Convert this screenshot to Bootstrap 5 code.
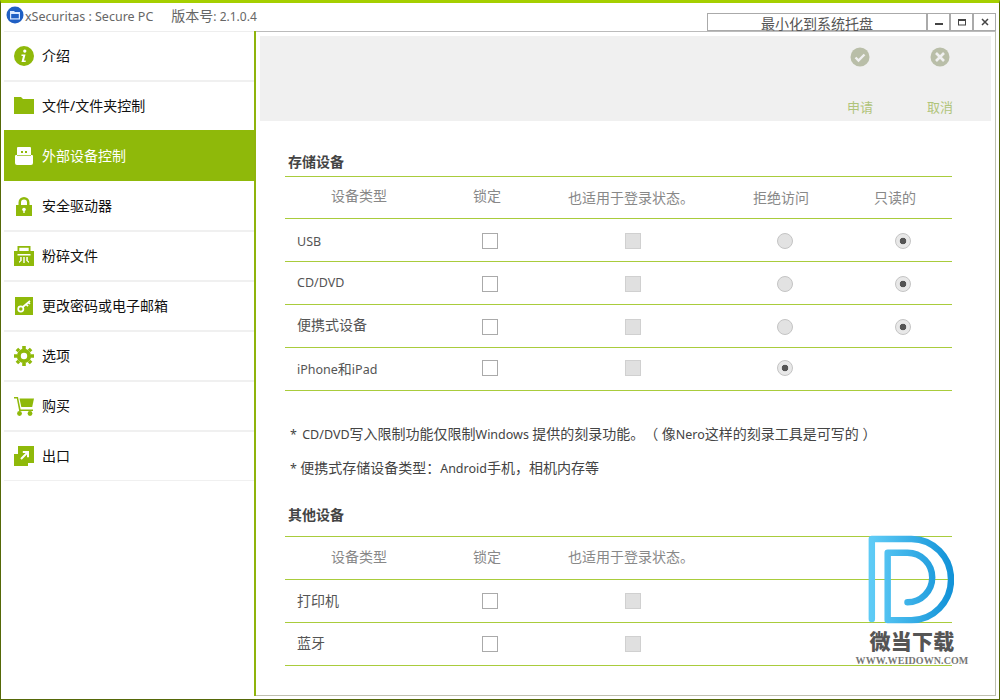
<!DOCTYPE html>
<html lang="zh">
<head>
<meta charset="utf-8">
<title>xSecuritas</title>
<link href="https://cdn.jsdelivr.net/npm/bootstrap@5.3.0/dist/css/bootstrap.min.css" rel="stylesheet">
<style>
html,body{height:100%;margin:0;overflow:hidden;background:#fff}
body{font-family:"Noto Sans","Noto Sans CJK SC",sans-serif;font-size:14px;line-height:1.2;color:#333;text-spacing-trim:space-all}
.win{width:1000px;height:700px;border-top:3px solid #a5cf00;border-left:1px solid #556808;border-right:1px solid #556808;border-bottom:1px solid #556808;position:relative;background:#fff}
.tbar{height:28px;padding-left:5px;padding-right:3px}
.tbar-title{color:#666;font-size:12.5px}
.tbar-title span{margin-top:6px}
.app-ico{width:18px;height:18px;margin-top:3px;margin-right:1px;flex:none}
.ver{margin-left:18px;font-size:14px;margin-top:5px!important}
.ver b{font-weight:400;font-size:12px}
.tray{width:220px;height:18px;margin-top:10px;border:1px solid #aaa;text-align:center;color:#555;font-size:14px;line-height:19px;background:#fff;white-space:nowrap}
.wbtn{width:23px;height:18px;margin-top:10px;border:1px solid #aaa;display:flex;align-items:center;justify-content:center;background:#fff}
.wbtn svg{width:10px;height:10px}
.bodyrow{height:665px;padding-left:3px;padding-right:3px}
.side{width:252px;flex:none;border-right:2px solid #8fb40c}
.side-item{height:50px;display:flex;align-items:center;gap:8px;padding-left:10px;color:#111;border-bottom:2px solid #f0f0f0;font-size:14px}
.side-item.first{height:51px;border-top:1px solid #eee}
.side-item.pre{border-bottom:0;height:48px}
.side-item.sel{background:#8fb90a;color:#fff;border-bottom:0;height:51px;padding-top:1px}
.side-item.post{height:51px;padding-top:1px}
.side-item.last{border-bottom:1px solid #f0f0f0;height:49px}
.side-item svg{width:20px;height:20px;flex:none}
.main{flex:1;border-top:1px solid #bbb;border-right:1px solid #bfc0b0;border-bottom:1px solid #bfc0b0;padding:4px 4px 0 4px;min-width:0;height:665px}
.actionbar{height:85px;background:#f0f0f0;padding-right:11px;justify-content:flex-end}
.act{width:80px;text-align:center;color:#b0c47a;font-size:13px;padding-top:11px}
.act svg{width:20px;height:20px;display:block;margin:0 auto 33px}
.pane{padding:0 39px 0 25px}
.sect{font-weight:700;font-size:14px;color:#444;padding-left:3px}
.sect.s1{margin-top:33px;height:22px}
.sect.s2{margin-top:31px;height:29px}
.lat{font-size:12.5px}
table.grid{table-layout:fixed;width:667px;margin:0;border-top:1px solid #a9cc3c;border-collapse:separate;border-spacing:0}
table.grid td,table.grid th{border-bottom:1px solid #a9cc3c;padding:0;text-align:center;vertical-align:middle;font-weight:400;background:transparent;box-shadow:none}
table.grid th{color:#888;height:42px;font-size:14px}
table.grid.t2 th{height:43px}
table.grid td{height:43px;color:#555;font-size:14px}
table.grid td.nm{text-align:left;padding-left:12px}
.c1{width:145px}.c2{width:120px}.c3{width:166px}.c4{width:138px}.c5{width:98px}
.hn{padding-left:3px!important;padding-bottom:3px!important}
.hl{padding-right:6px!important;padding-bottom:3px!important}
.ha{padding-right:4px!important;padding-top:1px!important}
.hb{padding-right:8px!important;padding-top:1px!important}
.hc{padding-right:16px!important;padding-top:1px!important}
.t2 .hn,.t2 .hl,.t2 .ha{padding-top:0!important;padding-bottom:1px!important}
table.grid td.dn{padding-top:2px}
table.grid td.up{padding-bottom:2px}
.form-check-input.box{width:16px;height:16px;margin:0 auto;border:1px solid #aaa;border-radius:0;background:#fff;opacity:1;display:block;box-shadow:none}
.form-check-input.box:disabled{background:#e0e0e0;border-color:#d0d0d0;opacity:1}
.form-check-input.rad{width:16px;height:16px;margin:0 auto;border:1px solid #c4c4c4;border-radius:50%;background:#e2e2e2;background-image:none;opacity:1;display:block;box-shadow:none}
.form-check-input.rad:checked{background:radial-gradient(circle,#555 0 3px,#e8e8e8 3.6px);border-color:#c4c4c4}
.note{font-size:14px;color:#444;padding-left:5px;height:17px;line-height:17px;white-space:nowrap}
.n1{margin-top:34px}
.n2{margin-top:17px}
.wm{position:absolute;left:849px;top:529px;width:124px;text-align:center;pointer-events:none}
.wm svg{width:99px;height:97px;display:block;margin:0 0 0 5px}
.wm-cn{font-weight:900;font-size:21px;letter-spacing:.3px;color:#555;line-height:24px}
.wm-en{font-family:"Liberation Serif",serif;font-weight:700;font-size:10px;color:#777;line-height:12px;margin-top:2px;white-space:nowrap;letter-spacing:.1px}
</style>
</head>
<body>
<div class="win">
  <div class="tbar d-flex">
    <div class="tbar-title d-flex align-items-start flex-grow-1">
      <svg class="app-ico" viewBox="0 0 18 18"><circle cx="9" cy="9" r="8.500" fill="#1f5fc4"/><path d="M4 5h4l1 1h5v7.500H4z" fill="#dbe9ff"/><path d="M5.200 8h7.600v4.300H5.200z" fill="#1f5fc4"/></svg>
      <span>xSecuritas : Secure PC</span><span class="ver">版本号<b>: 2.1.0.4</b></span>
    </div>
    <div class="tray">最小化到系统托盘</div>
    <div class="wbtn"><svg viewBox="0 0 10 10"><rect x="1" y="6" width="8" height="2" fill="#444"/></svg></div>
    <div class="wbtn"><svg viewBox="0 0 10 10"><rect x="1.500" y="2.500" width="7" height="5.500" fill="none" stroke="#444"/><rect x="1" y="2" width="8" height="2" fill="#444"/></svg></div>
    <div class="wbtn"><svg viewBox="0 0 10 10"><path d="M2 2l6 6M8 2l-6 6" stroke="#444" stroke-width="1.500"/></svg></div>
  </div>
  <div class="bodyrow d-flex">
    <nav class="side">
      <div class="side-item first"><svg viewBox="0 0 20 20"><circle cx="10" cy="10" r="10" fill="#8fb90a"/><path d="M10.800 3.500a1.600 1.600 0 1 1-.01 0zM7.500 8.500h4l-1.500 6h1.700V16H7.500L9 10H7.500z" fill="#fff"/></svg><span>介绍</span></div>
      <div class="side-item pre"><svg viewBox="0 0 20 20"><path d="M0 1h7l2 2h11v15H0z" fill="#8fb90a"/></svg><span>文件/文件夹控制</span></div>
      <div class="side-item sel"><svg viewBox="0 0 20 20"><path d="M4 1h12a1 1 0 0 1 1 1v7h1a1 1 0 0 1 1 1v7a2 2 0 0 1-2 2H3a2 2 0 0 1-2-2v-7a1 1 0 0 1 1-1h1V2a1 1 0 0 1 1-1z" fill="#fff"/><path d="M7 5h2v2H7zM11 5h2v2h-2z" fill="#8fb90a"/><path d="M3 9.500h14" stroke="#8fb90a" stroke-width=".7"/></svg><span>外部设备控制</span></div>
      <div class="side-item post"><svg viewBox="0 0 20 20"><path d="M4.500 9V6.500a5.500 5.500 0 0 1 11 0V9H13V6.500a3 3 0 0 0-6 0V9z" fill="#8fb90a"/><path d="M2 9h16v11H2z" fill="#8fb90a"/><circle cx="10" cy="13.500" r="1.800" fill="#fff"/><path d="M9.300 14h1.400v3H9.300z" fill="#fff"/></svg><span>安全驱动器</span></div>
      <div class="side-item"><svg viewBox="0 0 20 20"><path d="M3.500 6V0h13v6h-1.800V1.800H5.300V6z" fill="#8fb90a"/><path d="M0 5h20v15H0z" fill="#8fb90a"/><path d="M3.500 8h13v1.400h-13zM6.200 11h1.500v3.800L5 17v-1.400l1.200-1zM9.300 11h1.400v6H9.300zM12.300 11h1.500v3.600l1.200 1V17l-2.700-2.200z" fill="#fff"/></svg><span>粉碎文件</span></div>
      <div class="side-item"><svg viewBox="0 0 20 20"><path d="M1 1h18v18H1z" fill="#8fb90a"/><circle cx="6.800" cy="13" r="2.600" fill="none" stroke="#fff" stroke-width="1.700"/><path d="M8.800 11l7.200-6.200M12 8.200l2 2M14.300 6.300l1.600 1.700" stroke="#fff" stroke-width="1.700" fill="none"/></svg><span>更改密码或电子邮箱</span></div>
      <div class="side-item"><svg viewBox="0 0 20 20"><circle cx="10" cy="10" r="5.200" fill="none" stroke="#8fb90a" stroke-width="4"/><g stroke="#8fb90a" stroke-width="3.600"><path d="M10 0v3M10 17v3M0 10h3M17 10h3M2.900 2.900L5 5M15 15l2.100 2.100M2.900 17.100L5 15M15 5l2.100-2.100"/></g></svg><span>选项</span></div>
      <div class="side-item"><svg viewBox="0 0 20 20"><path d="M0 1h4l2.600 12.500H19v1.500H5.200L2.800 2.600H0z" fill="#8fb90a"/><path d="M5.500 2.500H20l-1.800 8.500H7.300z" fill="#8fb90a"/><circle cx="5.500" cy="17.500" r="2.400" fill="#8fb90a"/><circle cx="16" cy="17.500" r="2.400" fill="#8fb90a"/></svg><span>购买</span></div>
      <div class="side-item last"><svg viewBox="0 0 20 20"><path d="M4 0h16v17h-6v3H0V8h4z" fill="#8fb90a"/><path d="M7 13l6.500-6.500M8.800 6h5.200v5.200" stroke="#fff" stroke-width="2" fill="none"/></svg><span>出口</span></div>
    </nav>
    <main class="main">
      <div class="actionbar d-flex">
        <div class="act"><svg viewBox="0 0 20 20"><circle cx="10" cy="10" r="9.500" fill="#b9bea8"/><path d="M5.500 10.500l3 3 6-6" fill="none" stroke="#f0f0f0" stroke-width="2.400"/></svg>申请</div>
        <div class="act"><svg viewBox="0 0 20 20"><circle cx="10" cy="10" r="9.500" fill="#b9bea8"/><path d="M6 6l8 8M14 6l-8 8" fill="none" stroke="#f0f0f0" stroke-width="2.600"/></svg>取消</div>
      </div>
      <div class="pane">
        <div class="sect s1">存储设备</div>
        <table class="table grid">
          <colgroup><col class="c1"><col class="c2"><col class="c3"><col class="c4"><col class="c5"></colgroup>
          <thead><tr><th class="hn">设备类型</th><th class="hl">锁定</th><th class="ha">也适用于登录状态。</th><th class="hb">拒绝访问</th><th class="hc">只读的</th></tr></thead>
          <tbody>
            <tr><td class="nm dn"><span class="lat">USB</span></td><td class="dn"><input class="form-check-input box" type="checkbox"></td><td class="dn"><input class="form-check-input box" type="checkbox" disabled></td><td class="dn"><input class="form-check-input rad" type="radio" name="a"></td><td class="dn"><input class="form-check-input rad" type="radio" name="a" checked></td></tr>
            <tr><td class="nm up"><span class="lat">CD/DVD</span></td><td class="dn"><input class="form-check-input box" type="checkbox"></td><td class="dn"><input class="form-check-input box" type="checkbox" disabled></td><td class="dn"><input class="form-check-input rad" type="radio" name="b"></td><td class="dn"><input class="form-check-input rad" type="radio" name="b" checked></td></tr>
            <tr><td class="nm up">便携式设备</td><td class="dn"><input class="form-check-input box" type="checkbox"></td><td class="dn"><input class="form-check-input box" type="checkbox" disabled></td><td class="dn"><input class="form-check-input rad" type="radio" name="c"></td><td class="dn"><input class="form-check-input rad" type="radio" name="c" checked></td></tr>
            <tr><td class="nm"><span class="lat">iPhone</span>和<span class="lat">iPad</span></td><td class="up"><input class="form-check-input box" type="checkbox"></td><td class="up"><input class="form-check-input box" type="checkbox" disabled></td><td class="up"><input class="form-check-input rad" type="radio" name="d" checked></td><td></td></tr>
          </tbody>
        </table>
        <div class="note n1"><span class="lat">*&nbsp;&thinsp;CD/DVD</span>写入限制功能仅限制<span class="lat">Windows </span>提供的刻录功能。（ 像<span class="lat">Nero</span>这样的刻录工具是可写的 ）</div>
        <div class="note n2"><span class="lat">* </span>便携式存储设备类型：<span class="lat">Android</span>手机，相机内存等</div>
        <div class="sect s2">其他设备</div>
        <table class="table grid t2">
          <colgroup><col class="c1"><col class="c2"><col class="c3"><col class="c4"><col class="c5"></colgroup>
          <thead><tr><th class="hn">设备类型</th><th class="hl">锁定</th><th class="ha">也适用于登录状态。</th><th></th><th></th></tr></thead>
          <tbody>
            <tr><td class="nm">打印机</td><td><input class="form-check-input box" type="checkbox"></td><td><input class="form-check-input box" type="checkbox" disabled></td><td></td><td></td></tr>
            <tr><td class="nm up">蓝牙</td><td><input class="form-check-input box" type="checkbox"></td><td><input class="form-check-input box" type="checkbox" disabled></td><td></td><td></td></tr>
          </tbody>
        </table>
      </div>
    </main>
  </div>
  <div class="wm">
    <svg viewBox="0 0 100 98"><defs><linearGradient id="wg" x1="0" x2="1" y1="0" y2="0"><stop offset="0" stop-color="#5ecbf6"/><stop offset="1" stop-color="#1393d8"/></linearGradient></defs><path d="M17 88V7h40a40 41 0 0 1 0 82H33V21h20a25 25 0 0 1 0 50" fill="none" stroke="url(#wg)" stroke-width="6.500" stroke-linecap="round" stroke-linejoin="round"/></svg>
    <div class="wm-cn">微当下载</div>
    <div class="wm-en">WWW.WEIDOWN.COM</div>
  </div>
</div>
<script src="https://cdn.jsdelivr.net/npm/bootstrap@5.3.0/dist/js/bootstrap.bundle.min.js"></script>
</body>
</html>
